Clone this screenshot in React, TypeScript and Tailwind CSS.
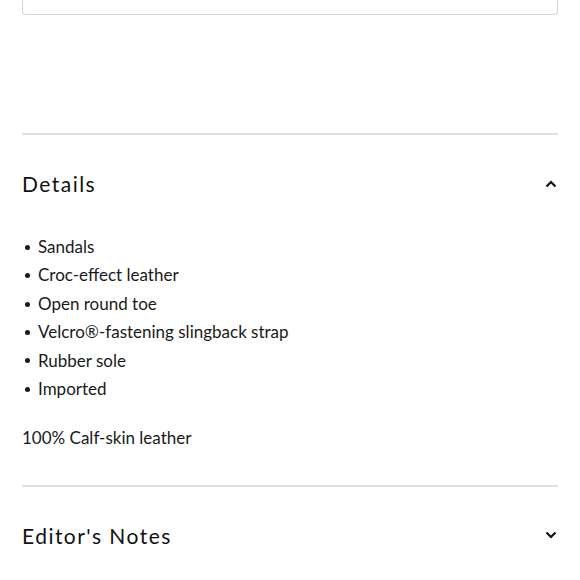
const details = [
  "Sandals",
  "Croc-effect leather",
  "Open round toe",
  "Velcro®-fastening slingback strap",
  "Rubber sole",
  "Imported",
];

function Chevron({ up }: { up?: boolean }) {
  return (
    <svg width="12" height="8" viewBox="0 0 12 8" className="mr-[1px]">
      <path
        d={up ? "M1.5 6.5 L6 2 L10.5 6.5" : "M1.5 1.5 L6 6 L10.5 1.5"}
        fill="none"
        stroke="#111"
        strokeWidth="2.2"
      />
    </svg>
  );
}

function SectionHeader({ title, open }: { title: string; open?: boolean }) {
  return (
    <div className="flex h-[97px] items-center justify-between">
      <h2 className="text-[21px] tracking-[0.07em] text-[#111] font-['Lato',sans-serif]">{title}</h2>
      <Chevron up={open} />
    </div>
  );
}

export default function App() {
  return (
    <div className="min-h-[580px] bg-white px-[22px] font-['Lato',sans-serif] text-[#1a1a1a]">
      <div className="h-[15px] rounded-b-[4px] border-x border-b border-[#d4d4d4]" />

      <div className="mt-[118px] h-[2px] bg-[#e0e0e0]" />
      <SectionHeader title="Details" open />
      <ul className="mt-[1px] text-[17px] leading-[28.4px]">
        {details.map((d) => (
          <li key={d} className="flex items-center">
            <span className="ml-[3px] mr-[8px] h-[5px] w-[5px] rounded-full bg-[#1a1a1a]" />
            {d}
          </li>
        ))}
      </ul>
      <p className="mt-[21px] text-[17px] leading-[28.4px]">100% Calf-skin leather</p>

      <div className="mt-[32px] h-[2px] bg-[#e0e0e0]" />
      <SectionHeader title="Editor's Notes" />
    </div>
  );
}
